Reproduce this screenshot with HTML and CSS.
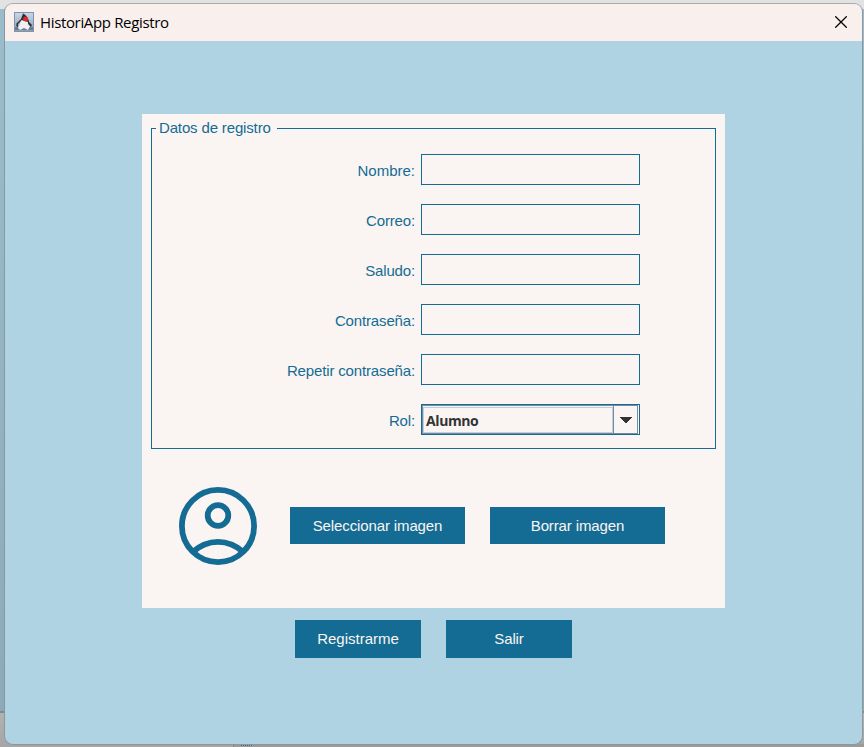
FILE: index.html
```html
<!DOCTYPE html>
<html lang="es">
<head>
<meta charset="utf-8">
<title>HistoriApp Registro</title>
<link rel="stylesheet" href="styles.css">
</head>
<body>
<div class="desktop">
  <div class="backdrop"><span class="handle"></span></div>
  <main class="window">
    <header class="titlebar">
      <svg class="app-icon" width="20" height="20" viewBox="0 0 20 20">
        <defs><linearGradient id="sky" x1="0" y1="0" x2="0" y2="1"><stop offset="0" stop-color="#c9d8e8"/><stop offset="1" stop-color="#8b9cb0"/></linearGradient></defs>
        <rect x=".5" y=".5" width="19" height="19" fill="url(#sky)" stroke="#8193aa"/>
        <path d="M1 15h18v3H1z" fill="#6f7c8b"/>
        <path d="M9 1.500C11 2 14.500 5.500 15 10L14 12L7 9L3 13L2 12L7 7Z" fill="#2b3036"/>
        <path d="M7.500 8L14 10L16 14L14 18L10 16L6 18L4 16Z" fill="#eef0f1"/>
        <path d="M14 9L18 13L17 15L14 12M4 11L2 14L4 15Z" fill="#2b3036"/>
        <circle cx="11.500" cy="7" r="2.500" fill="#e3282b"/>
      </svg>
      <h1 class="title">HistoriApp Registro</h1>
      <button class="close" aria-label="Cerrar"><svg width="12" height="12" viewBox="0 0 12 12"><path d="M.3.3 11.700 11.700M11.700.3.3 11.700" stroke="#000" stroke-width="1.250"/></svg></button>
    </header>
    <form class="content">
      <div class="panel">
        <section class="group">
          <h2 class="legend"><span>Datos de registro</span></h2>
          <div class="row"><label for="nombre" class="loose">Nombre:</label><input id="nombre" class="field"></div>
          <div class="row"><label for="correo">Correo:</label><input id="correo" class="field"></div>
          <div class="row"><label for="saludo">Saludo:</label><input id="saludo" class="field"></div>
          <div class="row"><label for="clave">Contraseña:</label><input id="clave" class="field" type="password"></div>
          <div class="row"><label for="clave2">Repetir contraseña:</label><input id="clave2" class="field" type="password"></div>
          <div class="row"><label>Rol:</label>
            <div class="combo"><div class="combo-inner"><span class="value">Alumno</span><span class="arrow"><svg width="12" height="6" viewBox="0 0 12 6" shape-rendering="crispEdges"><path d="M0 0h12L6.500 6h-1z" fill="#333"/></svg></span></div></div>
          </div>
        </section>
        <div class="picture">
          <svg class="avatar" width="78" height="78" viewBox="0 0 78 78" fill="none" stroke="#146c94" stroke-width="5.800">
            <circle cx="39" cy="39" r="36.100"/>
            <circle cx="39" cy="28.500" r="10.300"/>
            <path d="M13 65.500Q25 54.900 39 54.900T65 65.500"/>
          </svg>
          <button type="button" class="btn wide select">Seleccionar imagen</button>
          <button type="button" class="btn wide">Borrar imagen</button>
        </div>
      </div>
      <div class="actions">
        <button type="button" class="btn loose">Registrarme</button>
        <button type="button" class="btn">Salir</button>
      </div>
    </form>
  </main>
</div>
</body>
</html>
```

FILE: styles.css
```css
* { box-sizing: border-box; }
body { margin: 0; overflow: hidden; font: 15px/18px "Liberation Sans", Arial, sans-serif; letter-spacing: -.15px; color: #146c94; }
.desktop { height: 747px; padding: 3px 1px 2px 4px; background: linear-gradient(#e2e2e2 0 9px, #9bbdcb 9px, #8cabb8 711px, #7d8b90 711px 713px, #b2b2b2 713px, #a5a5a5); }
.backdrop { position: absolute; left: 233px; bottom: 0; width: 631px; height: 3px; background: #9b9b9b; border-left: 1px solid #888; }
.handle { position: absolute; left: 7px; top: 0; width: 12px; height: 2px; background: repeating-linear-gradient(90deg, #456174 0 1px, #a3a3a3 1px 2px); }
.window { position: relative; width: 859px; height: 742px; border: 1px solid #8b979c; border-top-color: #aaa; border-radius: 9px; overflow: hidden; background: #afd3e2; }
.titlebar { display: flex; align-items: center; height: 37px; padding: 0 15px 0 9px; background: #f9f0ee; color: #000; }
.app-icon { flex: none; margin-top: -1px; }
.title { margin: -2px auto 0 6px; font: 15px/20px "Open Sans", sans-serif; letter-spacing: -.35px; }
.close { display: flex; padding: 0; border: 0; background: none; margin-top: -1px; }
.content { display: flex; flex-direction: column; padding: 73px 0 0 137px; }
.panel { width: 583px; height: 494px; padding: 14px 9px 0; background: #faf5f2; }
.group { width: 565px; height: 321px; border: 1px solid #146c94; }
.legend { display: flex; height: 25px; margin: 0; font: inherit; }
.legend span { width: 121px; height: 18px; margin: -10px 0 0 4px; padding-left: 3px; background: #faf5f2; white-space: nowrap; }
.row { display: grid; grid-template-columns: 263px 219px; column-gap: 6px; height: 50px; align-items: start; }
.row label { text-align: right; padding-top: 8px; }
.loose { letter-spacing: 0; }
.field { width: 219px; height: 31px; padding: 0 5px; border: 1px solid #146c94; border-radius: 0; background: #faf5f2; outline: 0; }
.combo { height: 31px; padding: 0 1px 0 0; border: 1px solid #146c94; }
.combo-inner { display: flex; height: 29px; border: 1px solid #7a8a99; }
.value { flex: 1; margin: 1px 0 0; padding: 4px 0 0 2px; border: 1px solid #b8cfe5; font: bold 14px/18px "Open Sans", sans-serif; letter-spacing: -.4px; color: #333; }
.arrow { display: flex; width: 24px; align-items: center; justify-content: center; border-left: 1px solid #7a8a99; }
.picture { display: flex; align-items: center; margin: 38px 0 0 28px; }
.avatar { flex: none; }
.btn { width: 126px; height: 38px; padding: 0; border: 0; background: #146c94; color: #faf5f2; font: inherit; letter-spacing: -.12px; }
.btn.loose { letter-spacing: 0; }
.wide { width: 175px; height: 37px; margin-bottom: 1px; }
.select { margin: 0 25px 1px 33px; }
.actions { display: flex; gap: 25px; margin: 12px 0 0 153px; }
```
